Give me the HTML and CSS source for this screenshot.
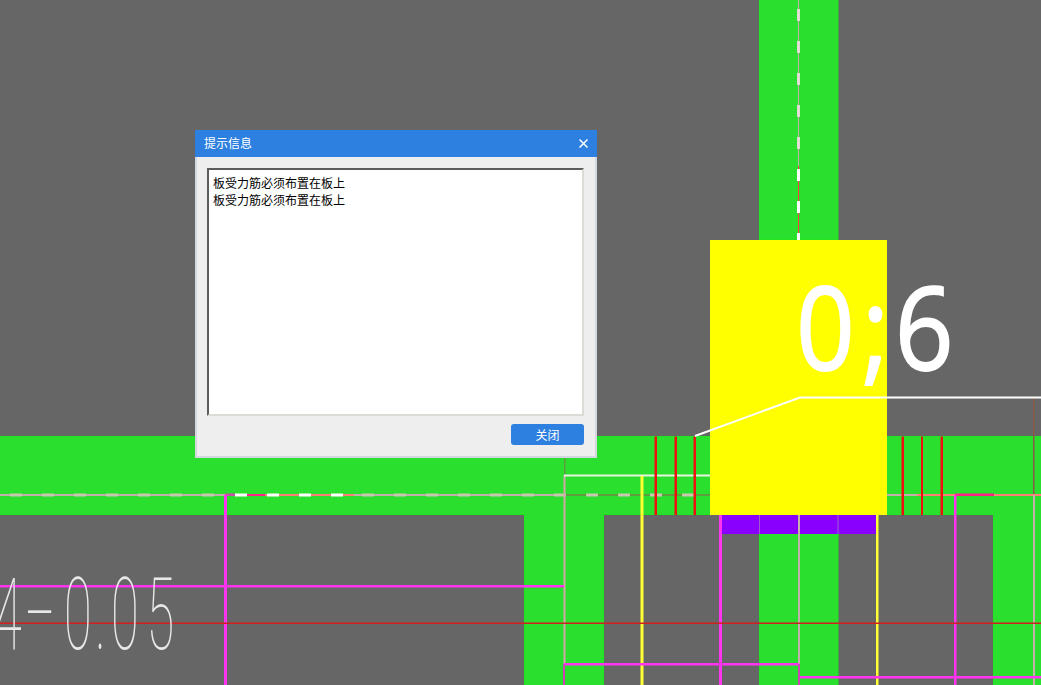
FILE: index.html
```html
<!DOCTYPE html>
<html lang="zh-CN">
<head>
<meta charset="utf-8">
<title>提示信息</title>
<link rel="stylesheet" href="styles.css">
</head>
<body>
<main class="stage">
  <svg class="drawing" width="1041" height="685" viewBox="0 0 1041 685" xmlns="http://www.w3.org/2000/svg">
    <!-- walls -->
    <path class="wall" d="M-2 436.500H1043V687H993.500V514.500H838V687H759.500V514.500H603.500V687H524.500V514.500H-2Z"/>
    <rect class="wall" x="759.500" y="-2" width="78.500" height="242"/>
    <rect class="column" x="710" y="240" width="177" height="275"/>
    <rect class="beam" x="721" y="515" width="155" height="19"/>
    <rect class="beam-seam" x="759" y="515" width="1" height="19"/>
    <rect class="beam-seam" x="837.500" y="515" width="1" height="19"/>

    <!-- dashed axis, horizontal -->
    <rect class="axis-grey" x="0" y="494" width="225" height="2"/>
    <rect class="axis-salmon" x="225" y="494" width="129" height="2"/>
    <rect class="axis-grey" x="354" y="494" width="210" height="2"/>
    <rect class="axis-dim" x="565" y="494" width="145" height="2"/>
    <rect class="axis-grey" x="887" y="494" width="30" height="2"/>
    <rect class="axis-salmon" x="917" y="494" width="124" height="2"/>
    <path class="dash-grey" d="M10 495h12M42 495h12M74 495h12M106 495h12M138 495h12M170 495h12M202 495h12M362 495h12M394 495h12M426 495h12M458 495h12M490 495h12M522 495h12M554 495h12M586 495h12M618 495h12M650 495h12M682 495h12"/>
    <rect class="axis-hot" x="247" y="494" width="18" height="2"/>
    <rect class="axis-hot" x="955" y="493.500" width="39" height="2.500"/>
    <rect class="axis-mauve" x="225" y="493.500" width="10" height="2.500"/>
    <path class="dash-white" d="M235 495h12M267 495h12M299 495h12M331 495h12"/>

    <!-- dashed axis, vertical -->
    <rect class="axis-grey" x="798" y="0" width="1" height="166"/>
    <rect class="axis-red" x="798" y="166" width="1" height="74"/>
    <path class="dash-vgrey" d="M798.500 9v12M798.500 41v12M798.500 73v12M798.500 105v12M798.500 137v12"/>
    <path class="dash-vwhite" d="M798.500 169v12M798.500 201v12M798.500 233v7"/>

    <!-- grid lines below the walls -->
    <rect class="axis-grey" x="798" y="515" width="2" height="170"/>
    <rect class="axis-grey" x="1033" y="495" width="2" height="190"/>
    <rect class="axis-dark" x="1033" y="397" width="1.500" height="97"/>
    <rect class="axis-dim" x="564" y="458" width="1.500" height="17"/>
    <rect class="axis-pink" x="563.500" y="475" width="2" height="190"/>
    <rect class="white-line" x="564" y="474.500" width="146" height="2"/>

    <!-- rebars -->
    <g class="yellow-bar">
      <rect x="640.500" y="476" width="3" height="209"/>
      <rect x="876" y="515" width="2.500" height="170"/>
    </g>
    <g class="red-bar">
      <rect x="654.500" y="436.500" width="2.500" height="78.500"/>
      <rect x="674.500" y="436.500" width="2.500" height="78.500"/>
      <rect x="693.500" y="436.500" width="2.500" height="78.500"/>
      <rect x="901.500" y="436.500" width="2.500" height="78.500"/>
      <rect x="921" y="436.500" width="2" height="78.500"/>
      <rect x="940.500" y="436.500" width="2.500" height="78.500"/>
    </g>
    <g class="magenta">
      <rect x="224" y="495" width="3" height="190"/>
      <rect x="0" y="585" width="564" height="2.500"/>
      <rect x="719" y="515" width="3" height="170"/>
      <rect x="954" y="495" width="2.500" height="190"/>
      <rect x="564" y="663" width="235" height="2.500"/>
      <rect x="799" y="676" width="242" height="2.500"/>
    </g>
    <g class="magenta-dim">
      <rect x="563" y="664" width="2" height="21"/>
      <rect x="798" y="664" width="2" height="21"/>
    </g>
    <rect class="datum" x="0" y="622.500" width="1041" height="1.500"/>

    <!-- leader and labels -->
    <polyline class="leader" points="695,436 800,397.500 1041,397.500"/>
    <text class="label-big" transform="translate(799 370) scale(.88 1)" x="-3 72 109" y="0">0;6</text>
    <text class="label-thin" transform="scale(.5 1)" x="-12" y="649">4</text>
    <text class="label-thin" x="25" y="644">-</text>
    <text class="label-thin" transform="scale(.5 1)" x="128 190 222 293" y="649">0.05</text>
  </svg>

  <section class="dialog">
    <header class="dialog-title">
      <span class="dialog-caption">提示信息</span>
      <svg class="close" width="9" height="9" viewBox="0 0 9 9" xmlns="http://www.w3.org/2000/svg"><path d="M.5.5l8 8M8.500.5l-8 8"/></svg>
    </header>
    <div class="dialog-body">
      <div class="message">
        <div>板受力筋必须布置在板上</div>
        <div>板受力筋必须布置在板上</div>
      </div>
      <div class="actions"><button class="btn" type="button">关闭</button></div>
    </div>
  </section>
</main>
</body>
</html>
```
FILE: styles.css
```css
* { box-sizing: border-box; }
html, body { margin: 0; padding: 0; background: #666666; overflow: hidden; }
.stage { position: relative; width: 1041px; height: 685px; overflow: hidden; }
.drawing { display: block; }

.wall { fill: #2adf2d; stroke: #1ee61e; stroke-width: 1; }
.column { fill: #ffff00; }
.beam { fill: #8a00ff; }
.beam-seam { fill: #9a60c8; }

.axis-grey { fill: #c4b0a8; }
.axis-salmon { fill: #ff7f78; }
.axis-dim { fill: #5f9c40; }
.axis-hot { fill: #ff2088; }
.axis-mauve { fill: #c850a8; }
.axis-red { fill: #ff4040; }
.axis-pink { fill: #d4a8a8; }
.axis-dark { fill: #8a5a48; }
.white-line { fill: #e8f4e0; }
.dash-grey { stroke: #c8c8b0; stroke-width: 3; fill: none; }
.dash-white { stroke: #ffffff; stroke-width: 3; fill: none; }
.dash-vgrey { stroke: #e0dcd4; stroke-width: 3; fill: none; }
.dash-vwhite { stroke: #ffffff; stroke-width: 3; fill: none; }

.yellow-bar rect { fill: #ffff33; }
.red-bar rect { fill: #f01010; }
.magenta rect { fill: #ff33f0; }
.magenta-dim rect { fill: #d040b8; }
.datum { fill: #d02020; }

.leader { fill: none; stroke: #ffffff; stroke-width: 2; }
.label-big { font-family: "Open Sans", "Noto Sans", sans-serif; font-size: 116px; fill: #ffffff; stroke: #ffffff; stroke-width: 2; }
.label-thin { font-family: Roboto, "Lato", sans-serif; font-weight: 100; font-size: 101px; fill: #e8e8e8; }

.dialog {
  position: absolute;
  left: 195px;
  top: 130px;
  width: 402px;
  height: 328px;
  display: flex;
  flex-direction: column;
  background: #eeeeee;
  border: 2px solid #d3d7df;
  border-top: 0;
  font-family: "Noto Sans CJK SC", sans-serif;
  font-size: 12px;
}
.dialog-title {
  display: flex;
  align-items: center;
  justify-content: space-between;
  height: 27px;
  margin: 0 -2px;
  padding: 0 9px;
  background: #2d7fe0;
  color: #ffffff;
}
.dialog-caption { margin-bottom: 2px; }
.close { display: block; }
.close path { stroke: #ffffff; stroke-width: 1.500; fill: none; }
.dialog-body {
  flex: 1;
  display: flex;
  flex-direction: column;
  padding: 11px 11px 11px 10px;
}
.message {
  height: 248px;
  padding: 4px 4px;
  background: #ffffff;
  border: 2px solid;
  border-color: #5c5c5c #dcdcd6 #dcdcd6 #5c5c5c;
  color: #000000;
  line-height: 17px;
}
.actions { display: flex; justify-content: flex-end; margin-top: 8px; }
.btn {
  width: 73px;
  height: 21px;
  padding: 0;
  border: 0;
  border-radius: 3px;
  background: #2d7fe0;
  color: #ffffff;
  font: inherit;
  line-height: 21px;
}
```
